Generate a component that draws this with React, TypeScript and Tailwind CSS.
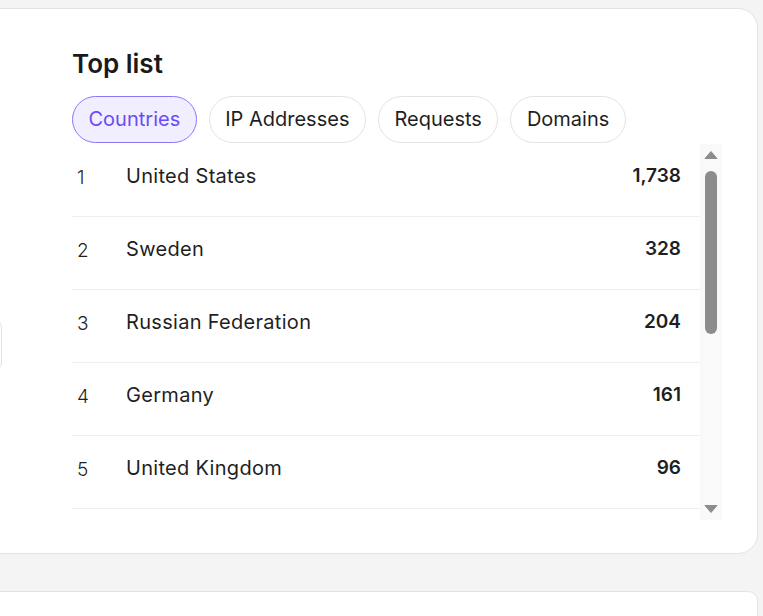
import React from 'react'

const rows = [
  { name: 'United States', value: '1,738' },
  { name: 'Sweden', value: '328' },
  { name: 'Russian Federation', value: '204' },
  { name: 'Germany', value: '161' },
  { name: 'United Kingdom', value: '96' },
  { name: 'Netherlands', value: '74' },
  { name: 'France', value: '51' },
  { name: 'China', value: '38' },
  { name: 'Canada', value: '27' },
  { name: 'Finland', value: '19' },
]

const tabs = ['Countries', 'IP Addresses', 'Requests', 'Domains']

function Scrollbar() {
  return (
    <div className="flex w-[22px] shrink-0 flex-col items-center bg-[#f9f9f9]">
      <svg width="14" height="10" viewBox="0 0 14 10" className="mt-[6px]">
        <path d="M7 1.5 L13 8.5 L1 8.5 Z" fill="#8c8c8c" stroke="#8c8c8c" strokeLinejoin="round" />
      </svg>
      <div className="mt-[11px] h-[163px] w-[12px] rounded-full bg-[#8c8c8c]" />
      <div className="flex-1" />
      <svg width="14" height="10" viewBox="0 0 14 10" className="mb-[6px]">
        <path d="M1 1.5 L13 1.5 L7 8.5 Z" fill="#8c8c8c" stroke="#8c8c8c" strokeLinejoin="round" />
      </svg>
    </div>
  )
}

export default function App() {
  return (
    <div
      className="h-[616px] w-[763px] overflow-hidden bg-[#f4f4f4] pt-[8px]"
      style={{ fontFamily: 'Inter, "Noto Sans", sans-serif' }}
    >
      <div className="-ml-[60px] mr-[5px] flex h-[546px] items-start rounded-[20px] border border-[#e3e3e3] bg-white">
        <div className="ml-[21px] mt-[311px] h-[50px] w-[40px] shrink-0 rounded-[7px] border border-[#e3e3e3]" />
        <div className="ml-[70px] flex flex-1 flex-col pr-[35px] pt-[39px]">
          <h2 className="text-[26px] font-semibold leading-[32px] text-[#1a1a1a]">Top list</h2>
          <div className="mt-[16px] flex gap-[12px]">
            {tabs.map((t, i) => (
              <button
                key={t}
                className={
                  i === 0
                    ? 'h-[47px] rounded-full border border-[#8a78f7] bg-[#f1eeff] px-[15.5px] pb-[2px] text-[20px] text-[#6a4cf5]'
                    : 'h-[47px] rounded-full border border-[#e3e3e3] bg-white px-[15.5px] pb-[2px] text-[20px] text-[#1f1f1f]'
                }
              >
                {t}
              </button>
            ))}
          </div>
          <div className="mt-[1px] flex h-[376px]">
            <div className="flex-1 overflow-hidden">
              {rows.map((r, i) => (
                <div key={r.name} className="flex h-[73px] border-b border-[#efefef] pt-[18px] leading-[28px] text-[#1f1f1f]">
                  <span className="mt-[2px] w-[54px] shrink-0 pl-[5px] text-[19px] font-light">{i + 1}</span>
                  <span className="flex-1 text-[20px] tracking-[0.3px]">{r.name}</span>
                  <span className="pr-[19px] text-[19px] font-semibold">{r.value}</span>
                </div>
              ))}
            </div>
            <Scrollbar />
          </div>
        </div>
      </div>
      <div className="-ml-[60px] mr-[5px] mt-[37px] h-[100px] rounded-[10px] border border-[#e3e3e3] bg-white" />
    </div>
  )
}
